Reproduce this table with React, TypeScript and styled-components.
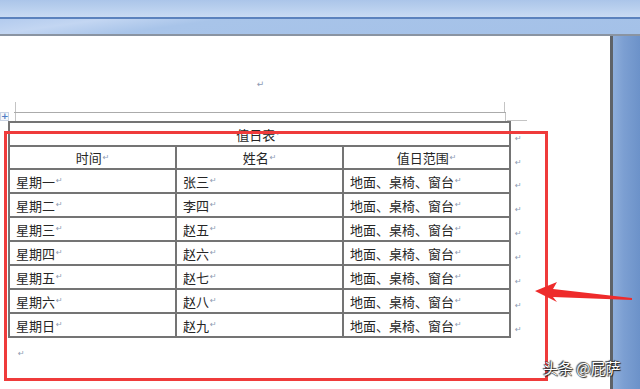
import { Fragment } from "react";
import styled, { createGlobalStyle } from "styled-components";

const GlobalStyle = createGlobalStyle`
  html, body {
    margin: 0;
    padding: 0;
    background: #ffffff;
  }
  body {
    font-family: "Liberation Sans", "Noto Sans CJK SC", sans-serif;
  }
`;

const Window = styled.div`
  position: relative;
  width: 640px;
  height: 389px;
  overflow: hidden;
  display: flex;
  flex-direction: column;
  background: #ffffff;
`;

const TitleStrip = styled.div`
  height: 17px;
  background: linear-gradient(180deg, #abc5e9 0%, #bcd2ef 60%, #c9dbf3 100%);
  border-bottom: 2px solid #5b82bd;
  flex-shrink: 0;
`;

const RibbonBand = styled.div`
  height: 15px;
  flex-shrink: 0;
  background: linear-gradient(172deg, #b3cbee 0%, #c3d6f2 14%, #a8c4e9 30%, #a4c1e8 100%);
  border-bottom: 2px solid #8a94a2;
`;

const Workspace = styled.div`
  flex: 1;
  display: flex;
`;

const Page = styled.div`
  width: 610px;
  background: #ffffff;
  border-right: 3px solid #5e6267;
  display: flex;
  flex-direction: column;
`;

const SideArea = styled.div`
  flex: 1;
  background: linear-gradient(90deg, #8eaedb 0%, #7c9fd2 40%, #6c92c9 100%);
`;

const HeaderArea = styled.div`
  margin-left: 14px;
  width: 492px;
  height: 76px;
  border-bottom: 1px solid #ababab;
  display: flex;
  flex-direction: column;
`;

const HeaderMark = styled.div`
  flex: 1;
  display: flex;
  justify-content: center;
  padding-top: 44px;
  box-sizing: border-box;
`;

const Crop = styled.div<{ $h: number; $w?: number }>`
  height: ${(p) => p.$h}px;
  width: ${(p) => (p.$w ? `${p.$w}px` : "auto")};
  margin: 0 1px;
  border-left: 1px solid #c4c4c4;
  border-right: 1px solid #c4c4c4;
`;

const CropBelow = styled.div`
  display: flex;
  margin-left: 14px;
  height: 8px;
`;

const CropTail = styled.div`
  width: 20px;
  align-self: flex-end;
  border-bottom: 1px solid #c4c4c4;
`;

const Pilcrow = styled.span<{ $size?: number }>`
  font-family: "DejaVu Sans", sans-serif;
  font-size: ${(p) => p.$size ?? 8}px;
  color: #8d9ab3;
  line-height: 1;
  margin-left: 1px;
`;

const TableRow = styled.div`
  position: relative;
  display: flex;
  margin-left: 8px;
`;

const TableHandle = styled.div`
  position: absolute;
  left: -8px;
  top: -9px;
  width: 7px;
  height: 7px;
  border: 1px solid #c9d3e3;
  background: #f4f7fb;
  color: #4d7cc4;
  font-family: "DejaVu Sans", sans-serif;
  font-size: 9px;
  font-weight: bold;
  line-height: 7px;
  text-align: center;
`;

const Grid = styled.div`
  display: grid;
  grid-template-columns: repeat(3, 165px);
  grid-template-rows: 22px 21px repeat(7, 22px);
  gap: 2px;
  padding: 2px;
  background: #747474;
`;

const Cell = styled.div<{ $center?: boolean; $span?: boolean }>`
  background: #ffffff;
  display: flex;
  align-items: center;
  justify-content: ${(p) => (p.$center ? "center" : "flex-start")};
  grid-column: ${(p) => (p.$span ? "1 / -1" : "auto")};
  padding-left: ${(p) => (p.$center ? 0 : 6)}px;
  font-family: "Noto Sans CJK SC", "Liberation Sans", sans-serif;
  font-size: 13px;
  color: #262626;
  white-space: nowrap;
`;

const RowMarks = styled.div`
  display: grid;
  grid-template-rows: 24px 23px repeat(7, 24px);
  padding-left: 3px;
`;

const RowMark = styled.div`
  padding-top: 6px;
`;

const TailLine = styled.div`
  padding: 4px 0 0 17px;
`;

const Annotation = styled.div`
  position: absolute;
  left: 4px;
  top: 131px;
  width: 538px;
  height: 244px;
  border: 3px solid #ef3b3b;
  pointer-events: none;
`;

const Arrow = styled.svg`
  position: absolute;
  left: 530px;
  top: 278px;
`;

const Watermark = styled.div`
  position: absolute;
  left: 543px;
  top: 358px;
  font-family: "Noto Sans CJK SC", sans-serif;
  font-size: 15px;
  line-height: 20px;
  color: #ffffff;
  text-shadow: 0 0 1px #000, 1px 1px 1px #222, -1px -1px 1px #444;
  white-space: nowrap;
`;

const rows = [
  ["星期一", "张三"],
  ["星期二", "李四"],
  ["星期三", "赵五"],
  ["星期四", "赵六"],
  ["星期五", "赵七"],
  ["星期六", "赵八"],
  ["星期日", "赵九"],
];

const mark = "↵";

export default function App() {
  return (
    <>
      <GlobalStyle />
      <Window>
        <TitleStrip />
        <RibbonBand />
        <Workspace>
          <Page>
            <HeaderArea>
              <HeaderMark>
                <Pilcrow $size={9}>{mark}</Pilcrow>
              </HeaderMark>
              <Crop $h={10} />
            </HeaderArea>
            <CropBelow>
              <Crop $h={8} $w={489} />
              <CropTail />
            </CropBelow>
            <TableRow>
              <TableHandle>+</TableHandle>
              <Grid>
                <Cell $center $span>
                  值日表<Pilcrow>{mark}</Pilcrow>
                </Cell>
                <Cell $center>
                  时间<Pilcrow>{mark}</Pilcrow>
                </Cell>
                <Cell $center>
                  姓名<Pilcrow>{mark}</Pilcrow>
                </Cell>
                <Cell $center>
                  值日范围<Pilcrow>{mark}</Pilcrow>
                </Cell>
                {rows.map(([day, name]) => (
                  <Fragment key={day}>
                    <Cell>
                      {day}
                      <Pilcrow>{mark}</Pilcrow>
                    </Cell>
                    <Cell>
                      {name}
                      <Pilcrow>{mark}</Pilcrow>
                    </Cell>
                    <Cell>
                      地面、桌椅、窗台<Pilcrow>{mark}</Pilcrow>
                    </Cell>
                  </Fragment>
                ))}
              </Grid>
              <RowMarks>
                {Array.from({ length: 9 }).map((_, i) => (
                  <RowMark key={i}>
                    <Pilcrow>{mark}</Pilcrow>
                  </RowMark>
                ))}
              </RowMarks>
            </TableRow>
            <TailLine>
              <Pilcrow>{mark}</Pilcrow>
            </TailLine>
          </Page>
          <SideArea />
        </Workspace>
        <Annotation />
        <Arrow width="110" height="28" viewBox="0 0 110 28">
          <polygon
            points="5,13 27,4 23,11 102,20 102,22 23,19 27,24"
            fill="#ee2b2b"
          />
        </Arrow>
        <Watermark>头条 @屁萨</Watermark>
      </Window>
    </>
  );
}
